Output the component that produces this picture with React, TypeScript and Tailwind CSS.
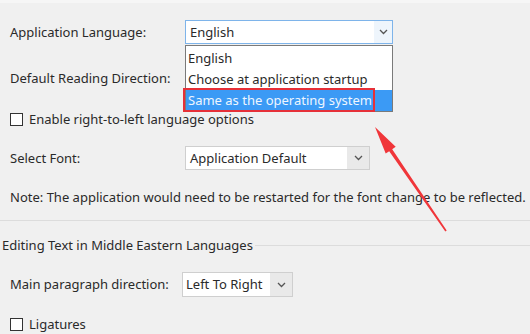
import React from 'react';

const font = { fontFamily: '"Noto Sans", "Open Sans", Arial, sans-serif' };

function Chevron({ className = '' }: { className?: string }) {
  return (
    <svg width="9" height="6" viewBox="0 0 9 6" className={className}>
      <path d="M1 1 L4.5 4.5 L8 1" fill="none" stroke="#555" strokeWidth="1.3" />
    </svg>
  );
}

function Checkbox() {
  return <div className="h-[13px] w-[13px] shrink-0 border border-[#333] bg-white" />;
}

export default function App() {
  return (
    <div
      className="relative h-[334px] w-[530px] overflow-hidden bg-[#f0f0f0] text-[13px] leading-[17px] text-[#2a2a2a]"
      style={font}
    >
      <div className="h-[3px] bg-[#f6f6f6]" />
      <div className="pt-[17px]">
        {/* Application Language */}
        <div className="flex h-[24px] items-center">
          <div className="w-[185px] pl-[10px]">Application Language:</div>
          <div className="flex h-[24px] w-[208px] items-stretch border border-[#7eb4ea] bg-white">
            <div className="flex flex-1 items-center pl-[4px]">English</div>
            <div className="flex w-[18px] items-center justify-center bg-[#eef5fc]">
              <Chevron />
            </div>
          </div>
        </div>

        {/* Default reading direction */}
        <div className="mt-[22px] flex h-[24px] items-center pl-[10px]">Default Reading Direction:</div>

        {/* RTL checkbox */}
        <div className="mt-[22px] flex h-[14px] items-center gap-[6px] pl-[10px]">
          <Checkbox />
          <span>Enable right-to-left language options</span>
        </div>

        {/* Select font */}
        <div className="mt-[20px] flex h-[24px] items-center">
          <div className="w-[185px] pl-[10px]">Select Font:</div>
          <div className="flex h-[24px] w-[185px] items-stretch border border-[#cfcfcf] bg-white">
            <div className="flex flex-1 items-center pl-[4px]">Application Default</div>
            <div className="flex w-[22px] items-center justify-center bg-[#e9e9e9]">
              <Chevron />
            </div>
          </div>
        </div>

        {/* Note */}
        <div className="mt-[19px] pl-[10px] whitespace-nowrap">
          Note: The application would need to be restarted for the font change to be reflected.
        </div>

        <div className="mt-[14px] h-px bg-[#dcdcdc]" />

        {/* Middle eastern group */}
        <div className="mt-[16px] flex items-center pl-[2px]">
          <span className="whitespace-nowrap">Editing Text in Middle Eastern Languages</span>
          <div className="ml-[2px] h-px flex-1 bg-[#dcdcdc]" />
        </div>

        <div className="mt-[18px] flex h-[25px] items-center">
          <div className="w-[182px] pl-[10px]">Main paragraph direction:</div>
          <div className="flex h-[25px] w-[111px] items-stretch border border-[#cfcfcf] bg-white">
            <div className="flex flex-1 items-center pl-[3px]">Left To Right</div>
            <div className="flex w-[22px] items-center justify-center bg-[#e9e9e9]">
              <Chevron />
            </div>
          </div>
        </div>

        <div className="mt-[20px] flex h-[14px] items-center gap-[6px] pl-[10px]">
          <Checkbox />
          <span>Ligatures</span>
        </div>
      </div>

      {/* Open dropdown list */}
      <div className="absolute left-[185px] top-[45px] w-[208px] border border-[#7a7a7a] bg-white pt-[2px]">
        <div className="flex h-[21px] items-center pl-[2px]">English</div>
        <div className="flex h-[21px] items-center pl-[2px]">Choose at application startup</div>
        <div className="flex h-[21px] items-center bg-[#3b9af5] pl-[2px] text-[#eef6ff]">
          Same as the operating system
        </div>
      </div>
      <div className="absolute left-[183px] top-[88px] h-[24px] w-[192px] border-2 border-[#e63038]" />

      {/* Red arrow */}
      <svg className="pointer-events-none absolute left-0 top-0" width="530" height="334">
        <polygon
          points="375,127 395.7,146.8 392.2,149.2 446.7,230.6 445.3,231.4 389.2,151.2 385.7,153.6"
          fill="#f0363a"
        />
      </svg>
    </div>
  );
}
